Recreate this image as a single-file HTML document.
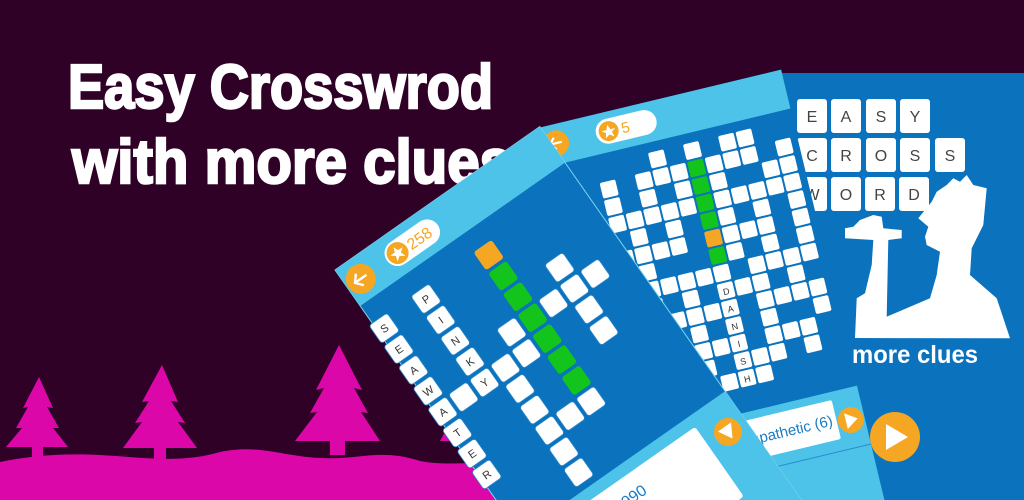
<!DOCTYPE html>
<html><head><meta charset="utf-8"><style>
html,body{margin:0;padding:0;background:#2f0127;width:1024px;height:500px;overflow:hidden}
svg{display:block}
text{font-family:"Liberation Sans",sans-serif}
</style></head><body>
<svg width="1024" height="500" viewBox="0 0 1024 500" xmlns="http://www.w3.org/2000/svg" style="overflow:hidden">
<defs>
<rect id="a" width="16" height="16" rx="2" fill="#fff"/>
<rect id="ag" width="16" height="16" rx="2" fill="#12c41c"/>
<rect id="b" width="22" height="22" rx="3" fill="#fff" stroke="#2a88cc" stroke-width="0.8"/>
<rect id="bg" width="22" height="22" rx="3" fill="#12c41c"/>
</defs>
<rect width="1024" height="500" fill="#2f0127"/>

<g fill="#db07a8">
<path d="M39,377 L53,408 L47,407 L59,428 L53,428 L68,447 L43,447 L43,458 L32,458 L32,447 L6,447 L22,428 L16,428 L28,407 L23,408 Z"/>
<path d="M162,365 L178,402 L171,401 L185,423 L178,422 L197,448 L166,448 L166,462 L154,462 L154,448 L123,448 L142,422 L135,423 L149,401 L142,402 Z"/>
<path d="M339,345 L362,390 L354,388 L368,413 L361,412 L380,441 L345,441 L345,455 L330,455 L330,441 L295,441 L317,412 L310,413 L324,388 L316,390 Z"/>
<path d="M458,400 L470,420 L465,419 L480,441 L440,441 L452,419 L447,420 Z"/>
<path d="M0,462 C30,456 60,453 100,455 C140,457 180,464 220,452 C260,444 280,456 320,458 C360,460 380,448 420,461 C440,465 460,463 480,463 L500,500 L0,500 Z"/>
</g>

<text x="68" y="108" font-size="62" font-weight="bold" fill="#fff" stroke="#fff" stroke-width="2.5" textLength="425" lengthAdjust="spacingAndGlyphs">Easy Crosswrod</text>
<text x="72" y="183" font-size="62" font-weight="bold" fill="#fff" stroke="#fff" stroke-width="2.5" textLength="440" lengthAdjust="spacingAndGlyphs">with more clues</text>

<rect x="779" y="73" width="245" height="427" fill="#0b72bd"/>
<g font-size="16" fill="#444" text-anchor="middle">
<rect x="797" y="99" width="30" height="34" rx="3" fill="#fff"/><text x="812" y="122">E</text>
<rect x="831" y="99" width="30" height="34" rx="3" fill="#fff"/><text x="846" y="122">A</text>
<rect x="866" y="99" width="30" height="34" rx="3" fill="#fff"/><text x="881" y="122">S</text>
<rect x="900" y="99" width="30" height="34" rx="3" fill="#fff"/><text x="915" y="122">Y</text>
<rect x="797" y="138" width="30" height="34" rx="3" fill="#fff"/><text x="812" y="161">C</text>
<rect x="831" y="138" width="30" height="34" rx="3" fill="#fff"/><text x="846" y="161">R</text>
<rect x="866" y="138" width="30" height="34" rx="3" fill="#fff"/><text x="881" y="161">O</text>
<rect x="900" y="138" width="30" height="34" rx="3" fill="#fff"/><text x="915" y="161">S</text>
<rect x="935" y="138" width="30" height="34" rx="3" fill="#fff"/><text x="950" y="161">S</text>
<rect x="797" y="177" width="30" height="34" rx="3" fill="#fff"/><text x="812" y="200">W</text>
<rect x="831" y="177" width="30" height="34" rx="3" fill="#fff"/><text x="846" y="200">O</text>
<rect x="865" y="177" width="30" height="34" rx="3" fill="#fff"/><text x="880" y="200">R</text>
<rect x="899" y="177" width="30" height="34" rx="3" fill="#fff"/><text x="914" y="200">D</text>
</g>
<path fill="#fff" d="M855,338 L856.7,298.3 L865,293.3 L871.7,265 L873.3,240 L845,238.3 L845,228.3 L853.3,226.7 L860,220 L873.3,215 L881.7,216.7 L883.3,228.3 L901.7,230 L901.7,238.3 L888.3,240 L886.7,316.7 L930,298.3 L936.7,275 L940,251.7 L926.7,245 L925,236.7 L928.3,226.7 L918.3,218.3 L931.7,201.7 L936.7,191.7 L946.7,185 L953.3,178.3 L960,181.7 L966.7,175 L973.3,185 L986.7,188.3 L983.3,225 L971.7,248.3 L970,275 L996.7,298.3 L1010,338.3 Z"/>
<text x="852" y="363" font-size="25" font-weight="bold" fill="#fff" textLength="126" lengthAdjust="spacingAndGlyphs">more clues</text>
<circle cx="895" cy="437" r="25" fill="#f5a623"/>
<path d="M886,424 L886,450 L908,437 Z" fill="#fff"/>

<g transform="translate(538,128) rotate(-13.5)">
<rect x="0" y="0" width="250" height="700" fill="#0b72bd"/>
<rect x="0" y="0" width="250" height="40" fill="#4ec3e9"/>
<circle cx="14" cy="19" r="13" fill="#f5a623"/>
<path d="M20,19 L8,19 M13,13 L8,19 L13,25" stroke="#fff" stroke-width="2.2" fill="none"/>
<rect x="55" y="7" width="62" height="25" rx="12.5" fill="#fff"/>
<circle cx="68" cy="19.5" r="10" fill="#f5a623"/>
<path d="M68,13 L70,18 L75,18 L71,21 L72.5,26 L68,23 L63.5,26 L65,21 L61,18 L66,18 Z" fill="#fff"/>
<text x="81" y="25" font-size="15" fill="#f5a623">5</text>
<g>
<use href="#a" x="101" y="50"/><use href="#a" x="137" y="50"/><use href="#a" x="173" y="50"/><use href="#a" x="191" y="50"/>
<use href="#a" x="47" y="68"/><use href="#a" x="83" y="68"/><use href="#a" x="101" y="68"/><use href="#a" x="119" y="68"/><use href="#ag" x="137" y="68"/><use href="#a" x="155" y="68"/><use href="#a" x="173" y="68"/><use href="#a" x="191" y="68"/><use href="#a" x="227" y="68"/>
<use href="#a" x="47" y="86"/><use href="#a" x="83" y="86"/><use href="#a" x="119" y="86"/><use href="#ag" x="137" y="86"/><use href="#a" x="155" y="86"/><use href="#a" x="209" y="86"/><use href="#a" x="227" y="86"/>
<use href="#a" x="47" y="104"/><use href="#a" x="65" y="104"/><use href="#a" x="83" y="104"/><use href="#a" x="101" y="104"/><use href="#a" x="119" y="104"/><use href="#ag" x="137" y="104"/><use href="#a" x="155" y="104"/><use href="#a" x="173" y="104"/><use href="#a" x="191" y="104"/><use href="#a" x="209" y="104"/><use href="#a" x="227" y="104"/>
<use href="#a" x="65" y="122"/><use href="#a" x="101" y="122"/><use href="#ag" x="137" y="122"/><use href="#a" x="155" y="122"/><use href="#a" x="191" y="122"/><use href="#a" x="227" y="122"/>
<use href="#a" x="47" y="140"/><use href="#a" x="65" y="140"/><use href="#a" x="83" y="140"/><use href="#a" x="101" y="140"/><rect x="137" y="140" width="16" height="16" rx="2" fill="#f5a623"/><use href="#a" x="155" y="140"/><use href="#a" x="173" y="140"/><use href="#a" x="191" y="140"/><use href="#a" x="227" y="140"/>
<use href="#a" x="65" y="158"/><use href="#ag" x="137" y="158"/><use href="#a" x="155" y="158"/><use href="#a" x="191" y="158"/><use href="#a" x="227" y="158"/>
<use href="#a" x="47" y="176"/><use href="#a" x="65" y="176"/><use href="#a" x="83" y="176"/><use href="#a" x="101" y="176"/><use href="#a" x="119" y="176"/><use href="#a" x="137" y="176"/><use href="#a" x="173" y="176"/><use href="#a" x="191" y="176"/><use href="#a" x="209" y="176"/><use href="#a" x="227" y="176"/>
<use href="#a" x="65" y="194"/><use href="#a" x="101" y="194"/><use href="#a" x="137" y="194"/><use href="#a" x="155" y="194"/><use href="#a" x="173" y="194"/><use href="#a" x="209" y="194"/>
<use href="#a" x="65" y="212"/><use href="#a" x="83" y="212"/><use href="#a" x="101" y="212"/><use href="#a" x="119" y="212"/><use href="#a" x="137" y="212"/><use href="#a" x="173" y="212"/><use href="#a" x="191" y="212"/><use href="#a" x="209" y="212"/><use href="#a" x="227" y="212"/>
<use href="#a" x="101" y="230"/><use href="#a" x="137" y="230"/><use href="#a" x="173" y="230"/><use href="#a" x="227" y="230"/>
<use href="#a" x="83" y="248"/><use href="#a" x="101" y="248"/><use href="#a" x="119" y="248"/><use href="#a" x="137" y="248"/><use href="#a" x="173" y="248"/><use href="#a" x="191" y="248"/><use href="#a" x="209" y="248"/>
<use href="#a" x="101" y="266"/><use href="#a" x="137" y="266"/><use href="#a" x="155" y="266"/><use href="#a" x="173" y="266"/><use href="#a" x="209" y="266"/>
<use href="#a" x="119" y="284"/><use href="#a" x="137" y="284"/><use href="#a" x="155" y="284"/>
</g>
<g font-size="9" fill="#333" text-anchor="middle">
<text x="145" y="206">D</text><text x="145" y="224">A</text><text x="145" y="242">N</text><text x="145" y="260">I</text><text x="145" y="278">S</text><text x="145" y="296">H</text>
</g>
<rect x="0" y="325" width="250" height="300" fill="#4ec3e9"/>
<rect x="110" y="333" width="112" height="40" rx="2" fill="#fff"/>
<text x="218" y="358" font-size="15" fill="#1a7cc4" text-anchor="end">Sympathetic (6)</text>
<line x1="0" y1="385" x2="250" y2="385" stroke="#2a8ccc" stroke-width="1"/>
<circle cx="236" cy="357" r="13" fill="#f5a623"/>
<path d="M231,349 L231,365 L243,357 Z" fill="#fff"/>
</g>

<g transform="translate(335,270) rotate(-35)">
<rect x="0" y="0" width="250" height="700" fill="#0b72bd" stroke="#7fd4f0" stroke-width="1"/>
<rect x="0" y="0" width="250" height="44" fill="#4ec3e9"/>
<circle cx="16" cy="22" r="15" fill="#f5a623"/>
<path d="M23,22 L9,22 M15,15 L9,22 L15,29" stroke="#fff" stroke-width="2.4" fill="none"/>
<rect x="48" y="9" width="62" height="26" rx="13" fill="#fff"/>
<circle cx="61" cy="22" r="11" fill="#f5a623"/>
<path d="M61,15 L63,20 L68.5,20 L64,23.5 L66,29 L61,25.5 L56,29 L58,23.5 L53.5,20 L59,20 Z" fill="#fff"/>
<text x="74" y="28" font-size="16" fill="#f5a623">258</text>
<g>
<use href="#b" x="-4" y="65"/><use href="#b" x="47" y="65"/><rect x="123.5" y="65" width="22" height="22" rx="3" fill="#f5a623"/>
<use href="#b" x="-4" y="90.5"/><use href="#b" x="47" y="90.5"/><use href="#bg" x="123.5" y="90.5"/>
<use href="#b" x="-4" y="116"/><use href="#b" x="47" y="116"/><use href="#bg" x="123.5" y="116"/><use href="#b" x="174.5" y="116"/>
<use href="#b" x="-4" y="141.5"/><use href="#b" x="47" y="141.5"/><use href="#b" x="98" y="141.5"/><use href="#bg" x="123.5" y="141.5"/><use href="#b" x="149" y="141.5"/><use href="#b" x="174.5" y="141.5"/><use href="#b" x="200" y="141.5"/>
<use href="#b" x="-4" y="167"/><use href="#b" x="21.5" y="167"/><use href="#b" x="47" y="167"/><use href="#b" x="72.5" y="167"/><use href="#b" x="98" y="167"/><use href="#bg" x="123.5" y="167"/><use href="#b" x="174.5" y="167"/>
<use href="#b" x="-4" y="192.5"/><use href="#b" x="72.5" y="192.5"/><use href="#bg" x="123.5" y="192.5"/><use href="#b" x="174.5" y="192.5"/>
<use href="#b" x="-4" y="218"/><use href="#b" x="72.5" y="218"/><use href="#bg" x="123.5" y="218"/>
<use href="#b" x="-4" y="243.5"/><use href="#b" x="72.5" y="243.5"/><use href="#b" x="98" y="243.5"/><use href="#b" x="123.5" y="243.5"/>
<use href="#b" x="72.5" y="269"/><use href="#b" x="72.5" y="294.5"/>
</g>
<g font-size="11" fill="#333" text-anchor="middle">
<text x="7" y="80">S</text><text x="7" y="105.5">E</text><text x="7" y="131">A</text><text x="7" y="156.5">W</text><text x="7" y="182">A</text><text x="7" y="207.5">T</text><text x="7" y="233">E</text><text x="7" y="258.5">R</text>
<text x="58" y="80">P</text><text x="58" y="105.5">I</text><text x="58" y="131">N</text><text x="58" y="156.5">K</text><text x="58" y="182">Y</text>
</g>
<rect x="0" y="323" width="250" height="400" fill="#4ec3e9"/>
<rect x="20" y="335" width="185" height="85" rx="3" fill="#fff"/>
<text x="60" y="362" font-size="16" fill="#1a7cc4">(4/5)1990</text>
<text x="60" y="384" font-size="16" fill="#1a7cc4">Favourite</text>
<circle cx="229" cy="358" r="14" fill="#f5a623"/>
<path d="M221,352 L237,352 L229,366 Z" fill="#fff"/>
</g>
</svg>
</body></html>
